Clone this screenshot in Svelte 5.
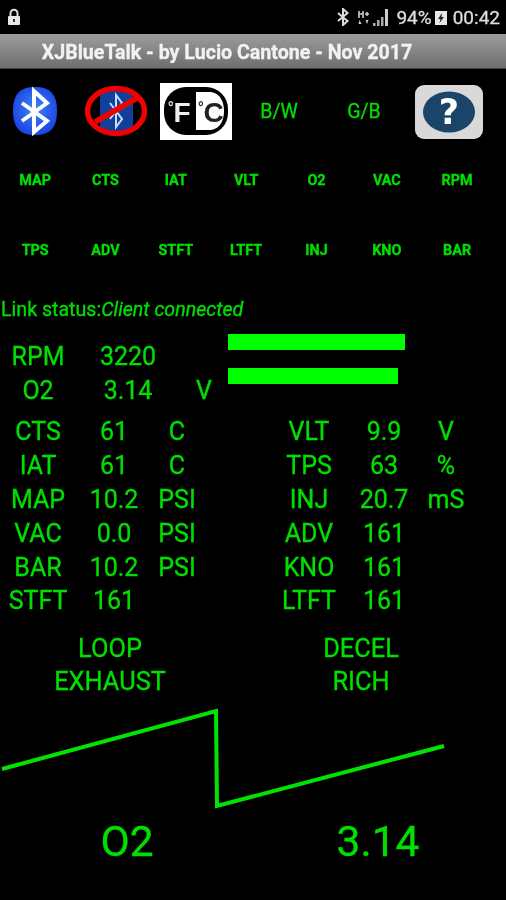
<script lang="ts">
	const topButtons = ['MAP', 'CTS', 'IAT', 'VLT', 'O2', 'VAC', 'RPM', 'TPS', 'ADV', 'STFT', 'LTFT', 'INJ', 'KNO', 'BAR'];

	const leftStats = [
		['CTS', '61', 'C'],
		['IAT', '61', 'C'],
		['MAP', '10.2', 'PSI'],
		['VAC', '0.0', 'PSI'],
		['BAR', '10.2', 'PSI'],
		['STFT', '161', '']
	];
	const rightStats = [
		['VLT', '9.9', 'V'],
		['TPS', '63', '%'],
		['INJ', '20.7', 'mS'],
		['ADV', '161', ''],
		['KNO', '161', ''],
		['LTFT', '161', '']
	];

	const rune = 'M22 103 L47 121 L34 132 V91 L47 103 L22 121';
</script>

<div class="screen">
	<div class="status">
		<svg class="lock" width="14" height="18" viewBox="0 0 14 18">
			<path d="M3.5 8V5.2a3.5 3.5 0 0 1 7 0V8" fill="none" stroke="#ddd" stroke-width="2"></path>
			<rect x="1" y="8" width="12" height="9" rx="1" fill="#e8e8e8"></rect>
			<rect x="6" y="11" width="2" height="3" fill="#333"></rect>
		</svg>
		<svg class="bt" width="12" height="18" viewBox="0 0 12 18">
			<path d="M1 5 L10.5 13 L6 17 V1 L10.5 5 L1 13" fill="none" stroke="#ddd" stroke-width="2"></path>
		</svg>
		<svg class="net" width="12" height="15" viewBox="0 0 12 15">
			<path d="M1 1v7M5 1v7M1 4h4M7 4h4M9 2v4" stroke="#ccc" stroke-width="1.6" fill="none"></path>
			<path d="M1.5 10l-1 4h3zM9 14l-1.5-4h3z" fill="#ccc"></path>
		</svg>
		<svg class="signal" width="18" height="18" viewBox="0 0 18 18">
			<rect x="0" y="15" width="2.5" height="3" fill="#aaa"></rect>
			<rect x="4" y="12" width="2.5" height="6" fill="#aaa"></rect>
			<rect x="8" y="9" width="2.5" height="9" fill="#aaa"></rect>
			<rect x="12" y="1" width="3" height="17" fill="#ccc"></rect>
		</svg>
		<span class="pct">94%</span>
		<svg class="battery" width="12" height="16" viewBox="0 0 12 16">
			<path d="M0 2h12v14H0z" fill="#e8e8e8"></path>
			<path d="M7 4L3 10h2.500L4.500 14 9 8H6.500z" fill="#222"></path>
		</svg>
		<span class="clock">00:42</span>
	</div>

	<div class="titlebar">XJBlueTalk - by Lucio Cantone - Nov 2017</div>

	<div class="iconrow">
		<div class="slot">
			<svg width="75" height="60" viewBox="0 83 75 60">
				<defs>
					<radialGradient id="btblue" cx="50%" cy="45%" r="60%">
						<stop offset="0" stop-color="#3a86fa"></stop>
						<stop offset="1" stop-color="#1a3fe0"></stop>
					</radialGradient>
				</defs>
				<path d="M35 87 C50 87 57 94 57 111 C57 128 50 135 35 135 C20 135 13 128 13 111 C13 94 20 87 35 87Z" fill="url(#btblue)"></path>
				<path d={rune} fill="none" stroke="#fff" stroke-width="4"></path>
			</svg>
		</div>
		<div class="slot">
			<svg width="81" height="60" viewBox="75 83 81 60">
				<rect x="100" y="91" width="33" height="42" rx="3" fill="#123f99"></rect>
				<path d="M110 103 L122 119 L116 127 V95 L122 103 L110 119" fill="none" stroke="#bfe0ff" stroke-width="2"></path>
				<ellipse cx="116" cy="111" rx="28.500" ry="22.500" fill="none" stroke="#f00000" stroke-width="5.500"></ellipse>
				<path d="M95 122 L137 98" stroke="#f00000" stroke-width="5.500"></path>
			</svg>
		</div>
		<div class="slot">
			<svg width="81" height="60" viewBox="156 83 81 60">
				<rect x="160" y="83" width="72" height="57" fill="#fff"></rect>
				<rect x="164" y="87" width="64" height="48" rx="22" fill="#000"></rect>
				<path d="M196 92 H209 C220 92 224 102 224 111 C224 120 220 130 209 130 H196Z" fill="#fff"></path>
				<text class="deg" x="168" y="122" fill="#eee"><tspan class="deg-mark" dy="-10">°</tspan><tspan dy="10">F</tspan></text>
				<text class="deg" x="198" y="122" fill="#222"><tspan class="deg-mark" dy="-10">°</tspan><tspan dy="10">C</tspan></text>
			</svg>
		</div>
		<div class="slot mode">B/W</div>
		<div class="slot mode">G/B</div>
		<div class="slot">
			<svg width="84" height="60" viewBox="407 83 84 60">
				<rect x="415" y="85" width="68" height="54" rx="9" fill="#d9d9d9"></rect>
				<ellipse cx="449" cy="112" rx="26" ry="20.500" fill="#1a4468"></ellipse>
				<text class="help" x="449" y="124" fill="#fff" text-anchor="middle">?</text>
			</svg>
		</div>
	</div>

	<div class="buttons">
		{#each topButtons as b}
			<div class="btn">{b}</div>
		{/each}
	</div>

	<div class="link">Link status:<em>Client connected</em></div>

	<div class="primary">
		<div class="primary-grid">
			<span>RPM</span><span>3220</span><span></span>
			<span>O2</span><span>3.14</span><span>V</span>
		</div>
		<div class="bars">
			<div class="bar" style="width: 177px"></div>
			<div class="bar" style="width: 170px"></div>
		</div>
	</div>

	<div class="stats">
		<div class="stats-col">
			{#each leftStats as row}
				{#each row as cell}
					<span>{cell}</span>
				{/each}
			{/each}
		</div>
		<div class="stats-col">
			{#each rightStats as row}
				{#each row as cell}
					<span>{cell}</span>
				{/each}
			{/each}
		</div>
	</div>

	<div class="flags">
		<span>LOOP</span><span>DECEL</span>
		<span>EXHAUST</span><span>RICH</span>
	</div>

	<svg class="chart" width="506" height="112" viewBox="0 700 506 112">
		<polyline points="2,769 216,711 217,806 444,746" fill="none" stroke="#00e400" stroke-width="4"></polyline>
	</svg>

	<div class="big">
		<span>O2</span><span>3.14</span>
	</div>
</div>

<style>
	:global(body) {
		background: #000;
	}
	.screen {
		width: 506px;
		height: 900px;
		overflow: hidden;
		display: flex;
		flex-direction: column;
		background: #000;
		color: #00e000;
		font-family: Roboto, sans-serif;
		-webkit-text-stroke: 0.3px currentColor;
		filter: blur(0.4px);
	}
	.status {
		height: 34px;
		flex-shrink: 0;
		display: flex;
		align-items: center;
		color: #ddd;
		font-size: 19px;
	}
	.lock {
		margin-left: 7px;
	}
	.bt {
		margin-left: auto;
	}
	.net {
		margin-left: 9px;
	}
	.signal {
		margin-left: 3px;
	}
	.pct {
		margin-left: 5px;
	}
	.battery {
		margin-left: 3px;
	}
	.clock {
		margin-left: 6px;
		margin-right: 6px;
	}
	.titlebar {
		height: 35px;
		flex-shrink: 0;
		background: linear-gradient(#9c9c9c, #8a8a8a 40%, #6e6e6e);
		border-bottom: 1px solid #444;
		box-sizing: border-box;
		display: flex;
		align-items: center;
		justify-content: center;
		color: #f2f2f2;
		font-size: 19.600px;
		font-weight: 700;
		padding-right: 52px;
		padding-top: 2px;
	}
	.iconrow {
		margin-top: 14px;
		height: 60px;
		flex-shrink: 0;
		display: grid;
		grid-template-columns: 75px 81px 81px 84px 86px 84px;
	}
	.slot {
		display: flex;
		align-items: center;
		justify-content: center;
		height: 60px;
	}
	.mode {
		font-size: 19.500px;
		padding-bottom: 4px;
		box-sizing: border-box;
	}
	.deg {
		font-family: "Liberation Sans", sans-serif;
		font-size: 28px;
		font-weight: 700;
	}
	.deg-mark {
		font-size: 14px;
	}
	.help {
		font-family: "DejaVu Sans", sans-serif;
		font-size: 35px;
		font-weight: 700;
	}
	.buttons {
		margin-top: 2px;
		flex-shrink: 0;
		display: grid;
		grid-template-columns: repeat(7, 70.330px);
		grid-auto-rows: 70.500px;
	}
	.btn {
		display: flex;
		align-items: center;
		justify-content: center;
		font-size: 14.400px;
		font-weight: 700;
	}
	.link {
		height: 34px;
		margin-top: 6px;
		flex-shrink: 0;
		padding-left: 1px;
		display: flex;
		align-items: center;
		font-size: 19.600px;
		white-space: pre;
	}
	.primary {
		margin-top: 6px;
		height: 68px;
		flex-shrink: 0;
		display: flex;
	}
	.primary-grid {
		width: 228px;
		height: 60px;
		padding-top: 8px;
		flex-shrink: 0;
		display: grid;
		grid-template-columns: 76px 104px 48px;
		grid-auto-rows: 33.500px;
		align-items: center;
		text-align: center;
		font-size: 25px;
	}
	.bars {
		display: flex;
		flex-direction: column;
		gap: 18px;
		padding-top: 2px;
	}
	.bar {
		height: 16px;
		background: #00ff00;
	}
	.stats {
		margin-top: 15px;
		flex-shrink: 0;
		display: grid;
		grid-template-columns: 272px 200px;
		font-size: 25px;
	}
	.stats-col {
		display: grid;
		grid-template-columns: 76px 76px 50px;
		grid-auto-rows: 33.800px;
		align-items: center;
		text-align: center;
	}
	.stats-col:last-child {
		grid-template-columns: 74px 76px 48px;
	}
	.flags {
		margin-top: 13px;
		flex-shrink: 0;
		display: grid;
		grid-template-columns: 220px 282px;
		grid-auto-rows: 33.800px;
		align-items: center;
		text-align: center;
		font-size: 25.400px;
	}
	.chart {
		display: block;
		flex-shrink: 0;
		margin-top: 2px;
	}
	.big {
		flex-shrink: 0;
		display: grid;
		grid-template-columns: 254px 248px;
		text-align: center;
		font-size: 42.500px;
		line-height: 60px;
	}
</style>
